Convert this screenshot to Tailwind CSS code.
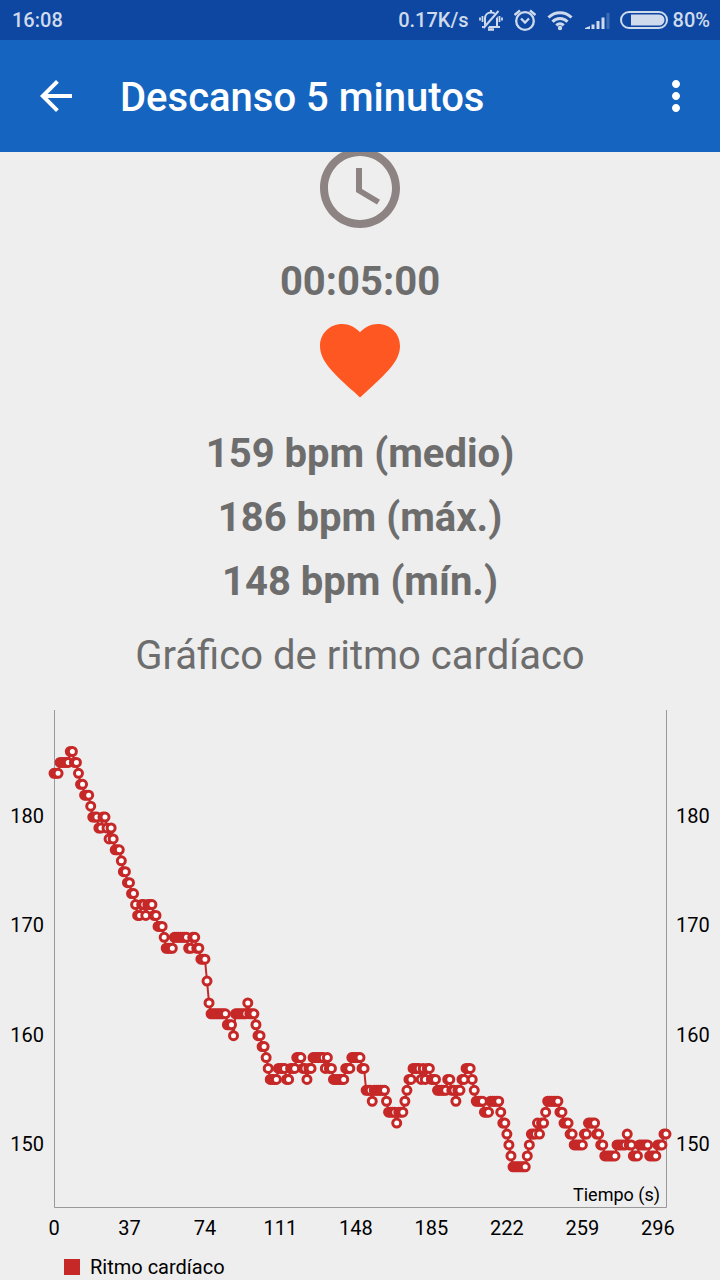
<!DOCTYPE html>
<html lang="es">
<head>
<meta charset="utf-8">
<meta name="viewport" content="width=device-width, initial-scale=1">
<title>Descanso 5 minutos</title>
<script src="https://cdn.jsdelivr.net/npm/@tailwindcss/browser@4"></script>
</head>
<body class="bg-[#eeeeee] font-['Roboto',sans-serif] text-[#6d6d6d]">
<div class="relative z-10">
  <div class="flex h-10 items-center justify-between bg-[#0d47a1] pr-[10px] pl-3 text-xl font-medium text-[#cfdaec]">
    <span>16:08</span>
    <div class="flex items-center">
      <span class="mr-[10px]">0.17K/s</span>
      <svg class="mr-[10px] h-6 w-6" viewBox="0 0 24 24" fill="none" stroke="currentColor" stroke-width="2" aria-label="Silencio">
        <path d="M6 18V10.500C6 7 8.500 4.500 12 4.500c3.500 0 6 2.500 6 6V18M3 19h18"/>
        <path d="M9 21.500h6" stroke-width="2.500"/>
        <path d="M12 2v3"/>
        <path d="M20 4 5.500 20.500" stroke="#0d47a1" stroke-width="4"/>
        <path d="M19.500 3 4.500 20"/>
        <path d="M3.500 8v6M1 9.500v3M20.500 8v6M23 9.500v3" stroke-width="1.800"/>
      </svg>
      <svg class="mr-[10px] h-6 w-6" viewBox="0 0 24 24" fill="none" stroke="currentColor" stroke-width="2.300" aria-label="Alarma">
        <circle cx="12" cy="13" r="8.800"/>
        <path d="m8 10.500 4 4 4-4M1.500 7 7 2.500M22.500 7 17 2.500"/>
      </svg>
      <svg class="mr-3 h-6 w-[26px]" viewBox="0 0 26 24" fill="none" stroke="currentColor" stroke-width="3" aria-label="Wi-Fi">
        <path d="M1.500 9.500a16.300 16.300 0 0 1 23 0M5.500 13.700a10.600 10.600 0 0 1 15 0M9.300 17.300a5.400 5.400 0 0 1 7.400 0"/>
        <circle cx="13" cy="20" r="2.200" fill="currentColor" stroke="none"/>
      </svg>
      <svg class="mr-[10px] h-6 w-[25px]" viewBox="0 0 25 24" fill="currentColor" aria-label="Cobertura">
        <path d="M0 21v-1l5-2v3zM6.500 16.500h3V21h-3zM11.500 13h3v8h-3zM16.500 9.500h3V21h-3z"/>
        <path d="M21.500 5h3v16h-3z" opacity=".25"/>
      </svg>
      <svg class="mr-[5px] h-6 w-12" viewBox="0 0 48 24" aria-label="Batería">
        <rect x="1" y="4" width="46" height="16" rx="8" fill="none" stroke="currentColor" stroke-width="2"/>
        <path d="M11 6.500h28a5.500 5.500 0 0 1 0 11H11z" fill="currentColor"/>
      </svg>
      <span>80%</span>
    </div>
  </div>
  <header class="flex h-28 items-center bg-[#1565c0] px-8 text-white">
    <button type="button" aria-label="Volver" class="h-12 w-12">
      <svg class="h-12 w-12" viewBox="0 0 24 24" fill="currentColor"><path d="M20 11H7.830l5.590-5.590L12 4l-8 8 8 8 1.410-1.410L7.830 13H20v-2z"/></svg>
    </button>
    <h1 class="ml-10 grow pt-1 text-[40px] font-medium">Descanso 5 minutos</h1>
    <button type="button" aria-label="Más opciones" class="-mr-3 h-12 w-12">
      <svg class="h-12 w-12" viewBox="0 0 24 24" fill="currentColor"><path d="M12 8c1.100 0 2-.9 2-2s-.9-2-2-2-2 .9-2 2 .9 2 2 2zm0 2c-1.100 0-2 .9-2 2s.9 2 2 2 2-.9 2-2-.9-2-2-2zm0 6c-1.100 0-2 .9-2 2s.9 2 2 2 2-.9 2-2-.9-2-2-2z"/></svg>
    </button>
  </header>
</div>
<main class="-mt-3 flex flex-col items-center text-[40px]">
  <svg class="h-24 w-24 text-[#8d8383]" viewBox="0 0 24 24" fill="currentColor" aria-label="Duración"><path d="M11.990 2C6.470 2 2 6.480 2 12s4.470 10 9.990 10C17.520 22 22 17.520 22 12S17.520 2 11.990 2zM12 20c-4.420 0-8-3.580-8-8s3.580-8 8-8 8 3.580 8 8-3.580 8-8 8z"/><path d="M12.500 7H11v6l5.250 3.150.75-1.230-4.500-2.670z"/></svg>
  <p class="mt-5 mb-1 leading-[52px] font-bold">00:05:00</p>
  <svg class="h-24 w-24 text-[#ff5722]" viewBox="0 0 24 24" fill="currentColor" aria-label="Ritmo cardíaco"><path d="M12 21.350l-1.450-1.320C5.400 15.360 2 12.280 2 8.500 2 5.420 4.420 3 7.500 3c1.740 0 3.410.81 4.500 2.090C13.090 3.810 14.760 3 16.500 3 19.580 3 22 5.420 22 8.500c0 3.780-3.400 6.860-8.550 11.540L12 21.350z"/></svg>
  <div class="mt-[14px] text-center leading-16 font-bold">
    <p>159 bpm (medio)</p>
    <p>186 bpm (máx.)</p>
    <p>148 bpm (mín.)</p>
  </div>
  <h2 class="mt-4 mb-5 leading-[52px]">Gráfico de ritmo cardíaco</h2>
  <svg class="block w-full" viewBox="0 0 720 553" font-size="20" fill="#000" role="img" aria-label="Ritmo cardíaco por segundo">
    <path d="M54.500 8v497.500h612V8" fill="none" stroke="#999" stroke-width="1"/>
    <text x="660" y="499" font-size="18" text-anchor="end">Tiempo (s)</text>
    <g id="axis"></g>
    <path id="line" fill="none" stroke="#c62828" stroke-width="2"/>
    <g id="points" fill="#fff" stroke="#c62828" stroke-width="3"></g>
  </svg>
  <div class="flex items-center self-start pl-16 text-xl leading-6 text-black">
    <span class="mr-[10px] h-4 w-4 bg-[#c62828]"></span>
    <span>Ritmo cardíaco</span>
  </div>
</main>
<script>
// Each pair is [bpm, last second at that bpm].
const runs = [[184,2],[185,7],[186,9],[185,11],[184,12],[183,14],[182,17],[181,18],[180,21],[179,23],[180,25],[179,26],[178,27],[179,28],[178,29],[177,32],[176,33],[175,35],[174,37],[173,39],[172,40],[171,42],[172,44],[171,45],[172,48],[171,50],[170,53],[169,54],[168,58],[169,65],[168,67],[169,69],[168,71],[167,74],[165,75],[163,76],[162,84],[161,87],[160,88],[162,94],[163,95],[162,98],[161,99],[160,101],[159,103],[158,104],[157,105],[156,109],[157,113],[156,115],[157,118],[158,121],[157,123],[156,124],[157,126],[158,132],[157,133],[158,134],[157,136],[156,142],[157,145],[158,150],[157,152],[155,155],[154,156],[155,162],[154,163],[153,167],[152,168],[153,171],[154,172],[155,173],[156,175],[157,179],[156,180],[157,181],[156,182],[157,184],[156,187],[155,192],[156,194],[155,196],[154,197],[155,199],[156,201],[157,204],[156,205],[155,206],[154,210],[153,213],[154,218],[153,219],[152,221],[151,222],[150,223],[149,224],[148,231],[149,232],[150,233],[151,236],[152,237],[151,238],[152,240],[153,241],[154,247],[153,249],[152,252],[151,254],[150,259],[151,261],[152,265],[151,267],[150,269],[149,275],[150,280],[151,281],[150,283],[149,286],[150,291],[149,295],[150,298],[151,300]];
const x = s => 54 + s * 2.04;
const y = v => 49.5 + (186 - v) * 10.93;
const NS = 'http://www.w3.org/2000/svg';
const axis = document.getElementById('axis');
function label(text, px, py, anchor) {
  const t = document.createElementNS(NS, 'text');
  t.setAttribute('x', px);
  t.setAttribute('y', py);
  t.setAttribute('text-anchor', anchor);
  t.textContent = text;
  axis.append(t);
}
for (const v of [180, 170, 160, 150]) {
  label(v, 44, y(v) + 6, 'end');
  label(v, 676, y(v) + 6, 'start');
}
for (let s = 0; s <= 296; s += 37) label(s, x(s), 533, 'middle');
const pts = [];
let sec = 0;
for (const [v, end] of runs) for (; sec <= end; sec++) pts.push([x(sec), y(v)]);
document.getElementById('line').setAttribute('d', 'M' + pts.map(p => p.join(' ')).join('L'));
const g = document.getElementById('points');
for (const [px, py] of pts) {
  const c = document.createElementNS(NS, 'circle');
  c.setAttribute('cx', px);
  c.setAttribute('cy', py);
  c.setAttribute('r', 4);
  g.append(c);
}
</script>
</body>
</html>
